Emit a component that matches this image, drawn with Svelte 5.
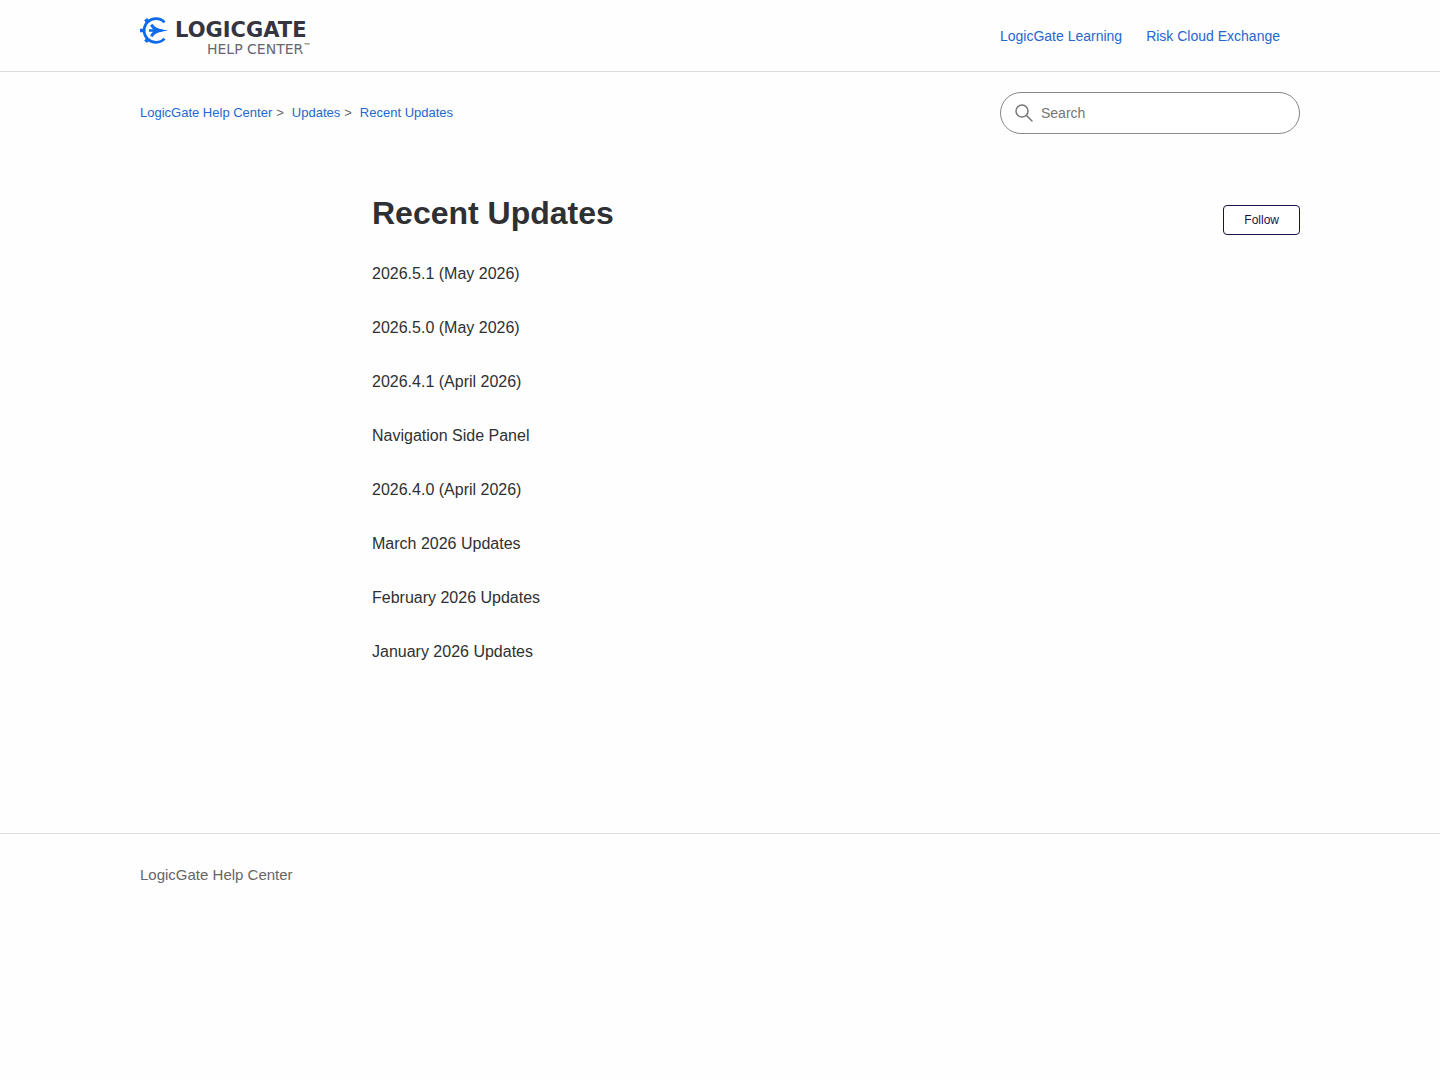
<script lang="ts">
  type Link = { label: string; href: string };

  const nav: Link[] = [
    { label: 'LogicGate Learning', href: '#learning' },
    { label: 'Risk Cloud Exchange', href: '#exchange' },
  ];

  const crumbs: Link[] = [
    { label: 'LogicGate Help Center', href: '#home' },
    { label: 'Updates', href: '#updates' },
    { label: 'Recent Updates', href: '#recent-updates' },
  ];

  const articles = [
    '2026.5.1 (May 2026)',
    '2026.5.0 (May 2026)',
    '2026.4.1 (April 2026)',
    'Navigation Side Panel',
    '2026.4.0 (April 2026)',
    'March 2026 Updates',
    'February 2026 Updates',
    'January 2026 Updates',
  ];

  let query = $state('');
  let following = $state(false);
</script>

<header class="header">
  <div class="container header-inner">
    <a class="logo" href="#home" aria-label="LogicGate Help Center home">
      <svg class="mark" viewBox="0 -1 28 28" fill="none" stroke="#0d6bea" aria-hidden="true">
        <path d="M24.5 5.4A11.800 11.800 0 1 0 24.5 21.600" stroke-width="2.800" />
        <path d="M5.600 2.200l2.400 3.200M5.600 24.800l2.400-3.200M0 13.500h4" stroke-width="3.600" />
        <path d="M9 13.500H22" stroke-width="2.600" />
        <path d="M11.200 7.800l4.800 5.700-4.800 5.700" stroke-width="3" />
        <path d="M14 9.200c3.500 2.300 8 3.400 14 4.300-6 .9-10.500 2-14 4.300l3-4.300z" fill="#0d6bea" stroke="none" />
      </svg>
      <span class="wordmark">
        <span class="brand">LOGICGATE</span>
        <span class="product">HELP CENTER<span class="tm">™</span></span>
      </span>
    </a>
    <nav class="nav" aria-label="Main">
      {#each nav as link (link.href)}
        <a href={link.href}>{link.label}</a>
      {/each}
    </nav>
  </div>
</header>

<main class="container">
  <div class="sub-nav">
    <ol class="crumbs">
      {#each crumbs as crumb (crumb.href)}
        <li><a href={crumb.href}>{crumb.label}</a></li>
      {/each}
    </ol>
    <form class="search" role="search" onsubmit={(e) => e.preventDefault()}>
      <label for="query" aria-label="Search">
        <svg viewBox="0 0 18 18" fill="none" stroke="#777" stroke-width="1.500" aria-hidden="true">
          <circle cx="7" cy="7" r="6" />
          <path d="M11.500 11.500L17 17" stroke-linecap="round" />
        </svg>
      </label>
      <input id="query" type="search" placeholder="Search" autocomplete="off" bind:value={query} />
    </form>
  </div>

  <section class="content">
    <div class="page-header">
      <h1>Recent Updates</h1>
      <button type="button" aria-pressed={following} onclick={() => (following = !following)}>
        {following ? 'Unfollow' : 'Follow'}
      </button>
    </div>
    <ul class="articles">
      {#each articles as title (title)}
        <li><a href="#article">{title}</a></li>
      {/each}
    </ul>
  </section>
</main>

<footer class="footer">
  <div class="container">
    <a href="#home">LogicGate Help Center</a>
  </div>
</footer>

<style>
  :global(body) {
    background: #fefefe;
    color: #2f3033;
    font-family: 'Liberation Sans', Arial, Helvetica, sans-serif;
    font-size: 16px;
    line-height: 24px;
  }
  a {
    color: #2467cf;
    text-decoration: none;
  }
  a:hover {
    text-decoration: underline;
  }
  ul,
  ol {
    list-style: none;
    margin: 0;
    padding: 0;
  }
  .container {
    box-sizing: border-box;
    max-width: 1200px;
    margin: 0 auto;
    padding: 0 20px;
  }
  .header {
    border-bottom: 1px solid #ddd;
  }
  .header-inner {
    display: flex;
    align-items: center;
    justify-content: space-between;
    min-height: 71px;
  }
  .logo {
    display: flex;
    align-items: flex-start;
    gap: 7px;
    padding-top: 2px;
    font-family: 'DejaVu Sans', sans-serif;
  }
  .logo:hover {
    text-decoration: none;
  }
  .mark {
    width: 28px;
    height: 28px;
  }
  .wordmark {
    display: flex;
    flex-direction: column;
    padding-top: 3px;
  }
  .brand {
    color: #35343f;
    font-size: 21px;
    font-weight: 700;
    line-height: 22px;
  }
  .product {
    display: flex;
    color: #66666e;
    font-size: 14px;
    line-height: 16px;
    padding-left: 32px;
  }
  .tm {
    font-size: 8px;
    line-height: 12px;
  }
  .nav {
    display: flex;
    gap: 24px;
    padding-right: 20px;
    font-size: 14px;
  }
  .sub-nav {
    display: flex;
    align-items: center;
    justify-content: space-between;
    padding: 20px 0;
  }
  .crumbs {
    display: flex;
    font-size: 13px;
  }
  .crumbs li + li::before {
    content: '>';
    color: #666;
    margin: 0 8px 0 4px;
  }
  .search {
    box-sizing: border-box;
    display: flex;
    align-items: center;
    gap: 8px;
    width: 300px;
    height: 42px;
    padding: 0 14px;
    border: 1px solid #87878c;
    border-radius: 21px;
    background: #fff;
  }
  .search label {
    display: flex;
  }
  .search svg {
    width: 18px;
    height: 18px;
  }
  .search input {
    flex: 1;
    min-width: 0;
    padding: 0;
    border: 0;
    outline: 0;
    background: none;
    color: #2f3033;
    font: inherit;
    font-size: 14px;
  }
  .search input::placeholder {
    color: #757575;
  }
  .search:focus-within {
    border-color: #2467cf;
  }
  .content {
    width: 80%;
    margin-left: auto;
    padding: 36px 0 154px;
  }
  .page-header {
    display: flex;
    align-items: flex-end;
    justify-content: space-between;
    margin-bottom: 11px;
  }
  h1 {
    margin: 0;
    font-size: 32px;
    line-height: 46px;
  }
  button {
    height: 30px;
    margin-bottom: 1px;
    padding: 0 20px;
    border: 1px solid #18124a;
    border-radius: 4px;
    background: #fff;
    color: #18124a;
    font: inherit;
    font-size: 12px;
    cursor: pointer;
  }
  .articles li {
    padding: 15px 0;
  }
  .articles a {
    color: #2f3033;
  }
  .footer {
    border-top: 1px solid #ddd;
    padding: 30px 0;
    font-size: 15px;
    line-height: 22px;
  }
  .footer a {
    color: #666;
  }
</style>
